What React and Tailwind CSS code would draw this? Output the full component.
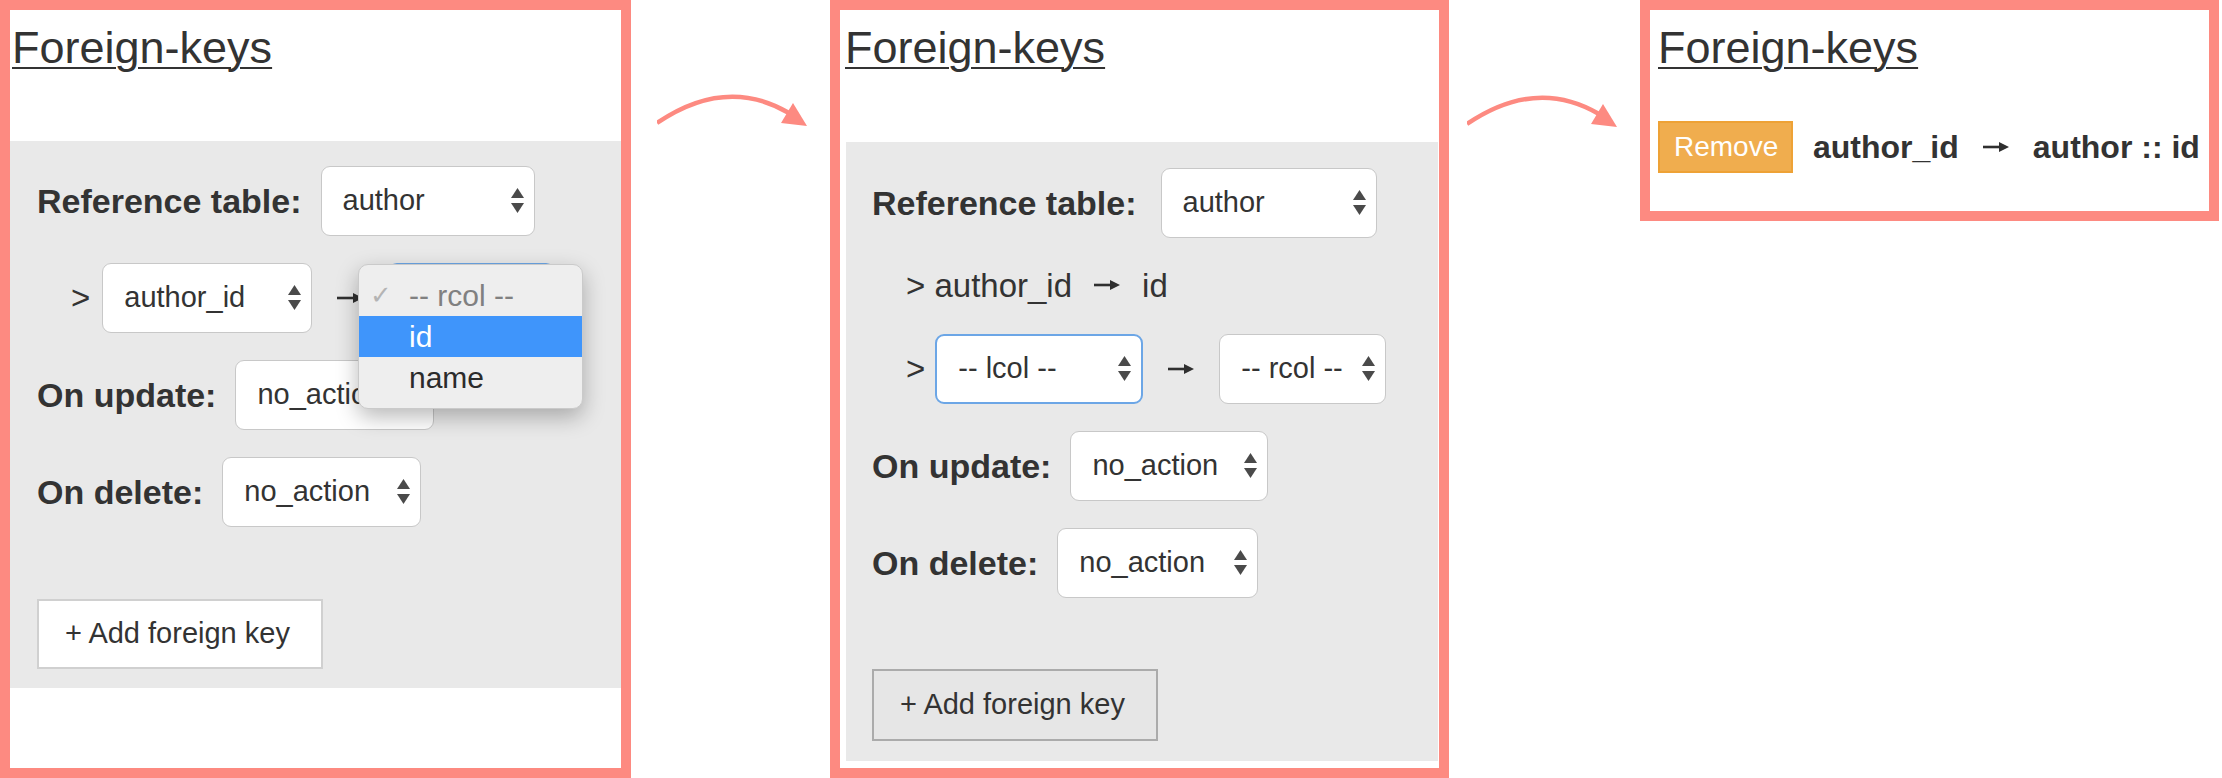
import React from 'react'

function Spinner() {
  return (
    <svg width="13" height="26" viewBox="0 0 13 26" className="shrink-0">
      <path d="M6.5 0 L13 10 L0 10 Z" fill="#4a4a4a" />
      <path d="M0 15 L13 15 L6.5 25 Z" fill="#4a4a4a" />
    </svg>
  )
}

function Select({ value, w, focus }) {
  const edge = focus ? 'border-2 border-[#6ca6e6]' : 'border-[1.5px] border-[#c8c8c8]'
  return (
    <div className={`flex h-[70px] shrink-0 items-center justify-between rounded-[9px] bg-white pl-[21px] pr-[10px] text-[29px] text-[#333] ${w} ${edge}`}>
      <span>{value}</span>
      <Spinner />
    </div>
  )
}

function Label({ children }) {
  return <span className="shrink-0 text-[34px] font-bold text-[#333]">{children}</span>
}

// the little "→" between columns
function RightArrow({ className = '' }) {
  return (
    <svg width="26" height="12" viewBox="0 0 26 12" className={`shrink-0 ${className}`}>
      <path d="M0 6 H19" stroke="#2f2f2f" strokeWidth="2.6" />
      <polygon points="16,1 26,6 16,11" fill="#2f2f2f" />
    </svg>
  )
}

function Heading({ pad }) {
  return (
    <div className={`pt-[13px] text-[45px] leading-[50px] text-[#333] ${pad}`}>
      <span className="underline decoration-2 underline-offset-[4px]">Foreign-keys</span>
    </div>
  )
}

function CurveArrow({ className }) {
  return (
    <svg width="152" height="60" viewBox="0 0 152 60" className={className}>
      <path d="M0 53 Q69 6 132 43" fill="none" stroke="#fd8a81" strokeWidth="4.5" />
      <polygon points="136,33 150,56 124,53" fill="#fd8a81" />
    </svg>
  )
}

function Menu() {
  return (
    <div className="absolute left-[321px] top-[1px] z-10 w-[225px] rounded-[10px] border border-[#cacaca] bg-[#eeeeee] py-[10px] text-[30px] shadow-[0_8px_22px_rgba(0,0,0,0.28)]">
      <div className="relative flex h-[41px] items-center pl-[50px] text-[#808080]">
        <span className="absolute left-[11px] font-['DejaVu_Sans',sans-serif] text-[26px] text-[#b4b4b4]">✓</span>
        -- rcol --
      </div>
      <div className="flex h-[41px] items-center bg-[#3f95fb] pl-[50px] text-white">id</div>
      <div className="flex h-[41px] items-center pl-[50px] text-[#2b2b2b]">name</div>
    </div>
  )
}

export default function App() {
  return (
    <div className="flex h-[778px] w-[2222px] items-start bg-white font-['Liberation_Sans',Arial,sans-serif]">
      {/* step 1: picking the referenced column */}
      <div className="h-[778px] w-[631px] shrink-0 border-[10px] border-[#fd8a81] bg-white">
        <Heading pad="pl-[2px]" />
        <div className="mt-[68px] flex flex-col gap-[27px] bg-[#e9e9e9] pb-[19px] pl-[27px] pt-[25px]">
          <div className="flex items-center gap-[19px]">
            <Label>Reference table:</Label>
            <Select value="author" w="w-[214px]" />
          </div>
          <div className="relative flex items-center pl-[34px] text-[33px] text-[#333]">
            <span>&gt;</span>
            <div className="ml-[12px]">
              <Select value="author_id" w="w-[210px]" />
            </div>
            <RightArrow className="mx-[25px]" />
            <Select value="-- rcol --" w="w-[167px]" focus />
            <Menu />
          </div>
          <div className="flex items-center gap-[19px]">
            <Label>On update:</Label>
            <Select value="no_action" w="w-[199px]" />
          </div>
          <div className="flex items-center gap-[19px]">
            <Label>On delete:</Label>
            <Select value="no_action" w="w-[199px]" />
          </div>
          <button className="mt-[45px] flex h-[70px] w-[286px] items-center border-2 border-[#d0d0d0] bg-white pl-[26px] text-[29px] text-[#333]">
            + Add foreign key
          </button>
        </div>
      </div>

      <div className="w-[199px] shrink-0">
        <CurveArrow className="ml-[26px] mt-[70px]" />
      </div>

      {/* step 2: first key added, next row empty */}
      <div className="h-[778px] w-[619px] shrink-0 border-[10px] border-[#fd8a81] bg-white">
        <Heading pad="pl-[5px]" />
        <div className="ml-[6px] mr-[1px] mt-[69px] flex flex-col gap-[27px] bg-[#e9e9e9] pb-[20px] pl-[26px] pt-[26px]">
          <div className="flex items-center gap-[24px]">
            <Label>Reference table:</Label>
            <Select value="author" w="w-[216px]" />
          </div>
          <div className="flex h-[42px] items-center pl-[34px] text-[33px] leading-[42px] text-[#333]">
            <span>&gt; author_id</span>
            <RightArrow className="mx-[22px] mt-[-2px]" />
            <span>id</span>
          </div>
          <div className="flex items-center pl-[34px] text-[33px] text-[#333]">
            <span>&gt;</span>
            <div className="ml-[10px]">
              <Select value="-- lcol --" w="w-[208px]" focus />
            </div>
            <RightArrow className="mx-[25px]" />
            <Select value="-- rcol --" w="w-[167px]" />
          </div>
          <div className="flex items-center gap-[19px]">
            <Label>On update:</Label>
            <Select value="no_action" w="w-[198px]" />
          </div>
          <div className="flex items-center gap-[19px]">
            <Label>On delete:</Label>
            <Select value="no_action" w="w-[201px]" />
          </div>
          <button className="mt-[44px] flex h-[72px] w-[286px] items-center border-2 border-[#ababab] bg-[#e6e6e6] pl-[26px] text-[29px] text-[#333]">
            + Add foreign key
          </button>
        </div>
      </div>

      <div className="w-[191px] shrink-0">
        <CurveArrow className="ml-[18px] mt-[71px]" />
      </div>

      {/* step 3: saved key */}
      <div className="w-[579px] shrink-0 border-[10px] border-[#fd8a81] bg-white pb-[38px]">
        <Heading pad="pl-[8px]" />
        <div className="mt-[48px] flex items-center pl-[8px] text-[32px] font-bold text-[#333]">
          <button className="flex h-[52px] w-[135px] items-center border-2 border-[#eea236] bg-[#f0ad4e] pl-[14px] text-[28px] font-normal text-white">
            Remove
          </button>
          <span className="ml-[20px]">author_id</span>
          <RightArrow className="mx-[24px]" />
          <span>author :: id</span>
        </div>
      </div>
    </div>
  )
}
